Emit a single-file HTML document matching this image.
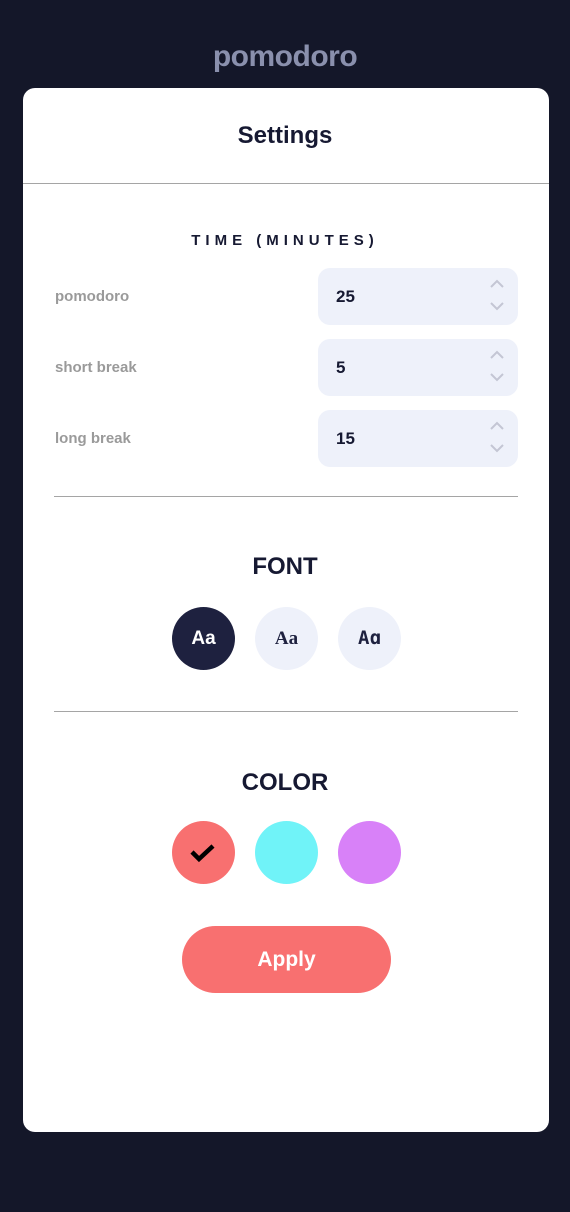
<!DOCTYPE html>
<html><head><meta charset="utf-8"><style>
*{margin:0;padding:0;box-sizing:border-box}
body{width:570px;height:1212px;background:#141729;font-family:"Liberation Sans",sans-serif;position:relative;overflow:hidden}
.logo{position:absolute;top:40px;left:0;width:570px;text-align:center;color:#8a90ad;font-weight:bold;font-size:30px;letter-spacing:-0.5px}
.card{position:absolute;left:23px;top:88px;width:526px;height:1044px;background:#fff;border-radius:12px}
.title{position:absolute;top:122px;left:0;width:570px;text-align:center;font-size:24px;font-weight:bold;color:#161932}
.hr{position:absolute;height:1px;background:#a5a5a5}
.abs{position:absolute}
.sec{position:absolute;left:0;width:570px;text-align:center;color:#161932;font-weight:bold}
.lbl{position:absolute;left:55px;font-size:15px;font-weight:bold;color:#9a9a9a}
.inp{position:absolute;left:318px;width:200px;height:57px;background:#eef1fa;border-radius:12px}
.inp b{position:absolute;left:18px;top:19px;font-size:17px;color:#161932}
.inp svg{position:absolute;right:14px;top:11px}
.circ{position:absolute;width:63px;height:63px;border-radius:50%;text-align:center;line-height:63px;font-weight:bold;font-size:19px}
.apply{position:absolute;left:182px;top:926px;width:209px;height:67px;border-radius:34px;background:#f87070;color:#fff;font-weight:bold;font-size:21px;text-align:center;line-height:67px}
</style></head><body>
<div class="logo">pomodoro</div>
<div class="card"></div>
<div class="title">Settings</div>
<div class="hr" style="left:23px;width:526px;top:183px"></div>
<div class="sec" style="top:232px;font-size:15px;letter-spacing:5px">TIME (MINUTES)</div>

<div class="lbl" style="top:288px">pomodoro</div>
<div class="inp" style="top:268px"><b>25</b><svg width="14" height="34" viewBox="0 0 14 34" fill="none" stroke="#c4c6d4" stroke-width="2"><path d="M1 8l6-6 6 6M1 24l6 6 6-6"/></svg></div>
<div class="lbl" style="top:359px">short break</div>
<div class="inp" style="top:339px"><b>5</b><svg width="14" height="34" viewBox="0 0 14 34" fill="none" stroke="#c4c6d4" stroke-width="2"><path d="M1 8l6-6 6 6M1 24l6 6 6-6"/></svg></div>
<div class="lbl" style="top:430px">long break</div>
<div class="inp" style="top:410px"><b>15</b><svg width="14" height="34" viewBox="0 0 14 34" fill="none" stroke="#c4c6d4" stroke-width="2"><path d="M1 8l6-6 6 6M1 24l6 6 6-6"/></svg></div>

<div class="hr" style="left:54px;width:464px;top:496px"></div>
<div class="sec" style="top:553px;font-size:24px">FONT</div>
<div class="circ" style="left:172px;top:607px;background:#1e213f;color:#fff">Aa</div>
<div class="circ" style="left:255px;top:607px;background:#eef1fa;color:#1e213f;font-family:'Liberation Serif',serif;font-weight:bold">Aa</div>
<div class="circ" style="left:338px;top:607px;background:#eef1fa;color:#1e213f;font-family:'DejaVu Sans Mono',monospace">Aɑ</div>

<div class="hr" style="left:54px;width:464px;top:711px"></div>
<div class="sec" style="top:769px;font-size:24px">COLOR</div>
<div class="circ" style="left:172px;top:821px;background:#f87070"><svg width="63" height="63" viewBox="0 0 63 63"><path d="M20 31l7 7 14-13" fill="none" stroke="#000" stroke-width="4.5"/></svg></div>
<div class="circ" style="left:255px;top:821px;background:#70f3f8"></div>
<div class="circ" style="left:338px;top:821px;background:#d881f8"></div>
<div class="apply">Apply</div>
</body></html>
